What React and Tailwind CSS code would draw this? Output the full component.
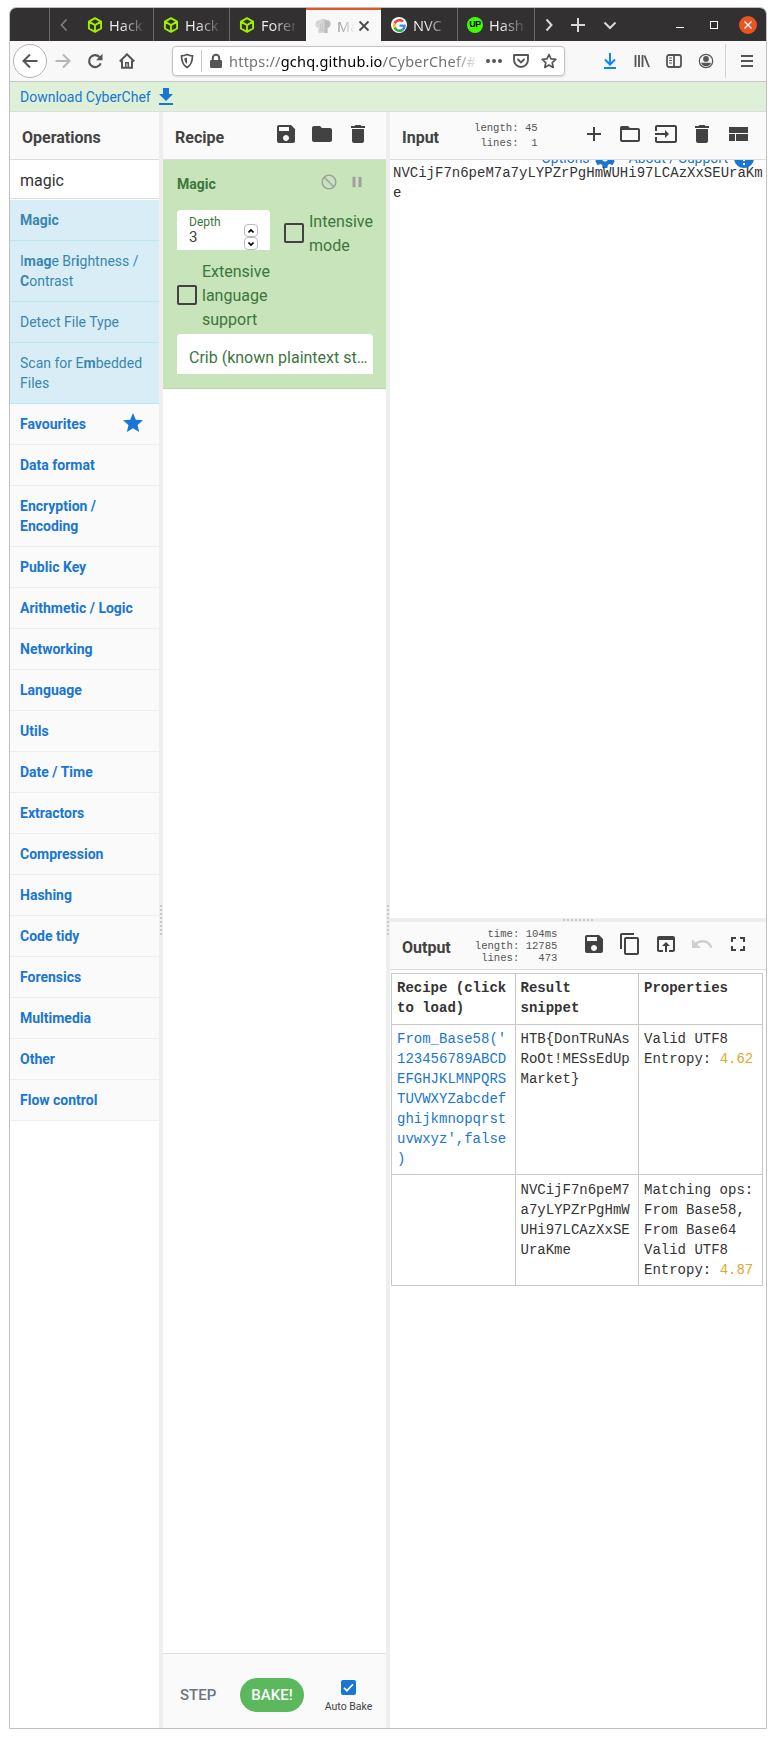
import React from "react";

const P = {
  save: "M17 3H5c-1.11 0-2 .9-2 2v14c0 1.1.89 2 2 2h14c1.1 0 2-.9 2-2V7l-4-4zm-5 16c-1.66 0-3-1.34-3-3s1.34-3 3-3 3 1.34 3 3-1.34 3-3 3zm3-10H5V5h10v4z",
  folder: "M10 4H4c-1.1 0-1.99.9-1.99 2L2 18c0 1.1.9 2 2 2h16c1.1 0 2-.9 2-2V8c0-1.1-.9-2-2-2h-8l-2-2z",
  trash: "M6 19c0 1.1.9 2 2 2h8c1.1 0 2-.9 2-2V7H6v12zM19 4h-3.5l-1-1h-5l-1 1H5v2h14V4z",
  add: "M19 13h-6v6h-2v-6H5v-2h6V5h2v6h6v2z",
  folderOpen: "M20 6h-8l-2-2H4c-1.1 0-1.99.9-1.99 2L2 18c0 1.1.9 2 2 2h16c1.1 0 2-.9 2-2V8c0-1.1-.9-2-2-2zm0 12H4V8h16v10z",
  input: "M21 3.01H3c-1.1 0-2 .9-2 2V9h2V4.99h18v14.03H3V15H1v4.01c0 1.1.9 1.98 2 1.98h18c1.1 0 2-.88 2-1.98v-14c0-1.11-.9-2-2-2zM11 16l4-4-4-4v3H1v2h10v3z",
  view: "M3 19h6v-7H3v7zm7 0h12v-7H10v7zM3 5v6h19V5H3z",
  copy: "M16 1H4c-1.1 0-2 .9-2 2v14h2V3h12V1zm3 4H8c-1.1 0-2 .9-2 2v14c0 1.1.9 2 2 2h11c1.1 0 2-.9 2-2V7c0-1.1-.9-2-2-2zm0 16H8V7h11v14z",
  open: "M19 4H5c-1.11 0-2 .9-2 2v12c0 1.1.89 2 2 2h4v-2H5V8h14v10h-4v2h4c1.1 0 2-.9 2-2V6c0-1.1-.89-2-2-2zm-7 6l-4 4h3v6h2v-6h3l-4-4z",
  undo: "M12.5 8c-2.65 0-5.05.99-6.9 2.6L2 7v9h9l-3.62-3.62c1.39-1.16 3.16-1.88 5.12-1.88 3.54 0 6.55 2.31 7.6 5.5l2.37-.78C21.08 11.03 17.15 8 12.5 8z",
  full: "M7 14H5v5h5v-2H7v-3zm-2-4h2V7h3V5H5v5zm12 7h-3v2h5v-5h-2v3zM14 5v2h3v3h2V5h-5z",
  star: "M12 17.27L18.18 21l-1.64-7.03L22 9.24l-7.19-.61L12 2 9.19 8.63 2 9.24l5.46 4.73L5.82 21z",
  block: "M12 2C6.48 2 2 6.48 2 12s4.48 10 10 10 10-4.48 10-10S17.52 2 12 2zm0 18c-4.42 0-8-3.58-8-8 0-1.85.63-3.55 1.69-4.9L16.9 18.31C15.55 19.37 13.85 20 12 20zm6.31-3.1L7.1 5.69C8.45 4.63 10.15 4 12 4c4.42 0 8 3.58 8 8 0 1.85-.63 3.55-1.69 4.9z",
  pause: "M6 19h4V5H6v14zm8-14v14h4V5h-4z",
  download: "M19 9h-4V3H9v6H5l7 7 7-7zM5 18v2h14v-2H5z",
  gear: "M19.43 12.98c.04-.32.07-.64.07-.98s-.03-.66-.07-.98l2.11-1.65c.19-.15.24-.42.12-.64l-2-3.46c-.12-.22-.39-.3-.61-.22l-2.49 1c-.52-.4-1.08-.73-1.69-.98l-.38-2.65C14.46 2.18 14.25 2 14 2h-4c-.25 0-.46.18-.49.42l-.38 2.65c-.61.25-1.17.59-1.69.98l-2.49-1c-.23-.09-.49 0-.61.22l-2 3.46c-.13.22-.07.49.12.64l2.11 1.65c-.04.32-.07.65-.07.98s.03.66.07.98l-2.11 1.65c-.19.15-.24.42-.12.64l2 3.46c.12.22.39.3.61.22l2.49-1c.52.4 1.08.73 1.69.98l.38 2.65c.03.24.24.42.49.42h4c.25 0 .46-.18.49-.42l.38-2.65c.61-.25 1.17-.59 1.69-.98l2.49 1c.23.09.49 0 .61-.22l2-3.46c.12-.22.07-.49-.12-.64l-2.11-1.65zM12 15.5c-1.93 0-3.5-1.57-3.5-3.5s1.57-3.5 3.5-3.5 3.5 1.57 3.5 3.5-1.57 3.5-3.5 3.5z",
  help: "M12 2C6.48 2 2 6.48 2 12s4.48 10 10 10 10-4.48 10-10S17.52 2 12 2zm1 17h-2v-2h2v2zm2.07-7.75l-.9.92C13.45 12.9 13 13.5 13 15h-2v-.5c0-1.1.45-2.1 1.17-2.83l1.24-1.26c.37-.36.59-.86.59-1.41 0-1.1-.9-2-2-2s-2 .9-2 2H8c0-2.21 1.79-4 4-4s4 1.79 4 4c0 .88-.36 1.68-.93 2.25z",
};

const Icon = ({ d, className = "size-6" }) => (
  <svg viewBox="0 0 24 24" fill="currentColor" className={`shrink-0 ${className}`}>
    <path d={d} />
  </svg>
);

const Line = ({ className = "size-4", sw = 2, box = 16, children }) => (
  <svg viewBox={`0 0 ${box} ${box}`} fill="none" stroke="currentColor" strokeWidth={sw} className={`shrink-0 ${className}`}>
    {children}
  </svg>
);

const Cube = () => (
  <Line className="size-4 text-[#9fef00]" sw={1.9}>
    <path d="M8 1.200l6.100 3.400v6.900L8 14.900l-6.100-3.400V4.600zM2 4.700L8 8.100l6-3.400M8 8v6.900" strokeLinejoin="round" />
  </Line>
);

const Hat = () => (
  <svg viewBox="0 0 16 16" className="size-4 shrink-0">
    <path d="M3.500 10C1 9.500.2 7.500.5 5.200.8 3 3 1.800 4.800 2.300 6 .6 10 .4 11.200 2.300c2.200-.5 4.100.9 4.300 2.900.2 2.300-.8 4.200-3 4.800V15h-9z" fill="#d6d6d6" />
    <path d="M9.500 1.200c.8.2 1.300.5 1.700 1.100 2.200-.5 4.100.9 4.300 2.900.2 2.300-.8 4.200-3 4.800V15h-3z" fill="#bcbcbc" />
    <path d="M3.500 12.800h9M5.500 6v6M7.500 5v7" stroke="#bdbdbd" strokeWidth=".7" />
  </svg>
);

const Google = () => (
  <span className="flex size-4 shrink-0 items-center justify-center rounded-full bg-white">
    <svg viewBox="0 0 48 48" className="size-[13px]">
      <path fill="#EA4335" d="M24 9.5c3.540 0 6.710 1.220 9.210 3.600l6.850-6.850C35.900 2.380 30.470 0 24 0 14.620 0 6.510 5.380 2.560 13.220l7.980 6.190C12.430 13.720 17.740 9.500 24 9.500z" />
      <path fill="#4285F4" d="M46.980 24.550c0-1.570-.15-3.090-.38-4.550H24v9.020h12.940c-.58 2.960-2.260 5.480-4.780 7.180l7.730 6c4.510-4.180 7.090-10.360 7.090-17.650z" />
      <path fill="#FBBC05" d="M10.530 28.590c-.48-1.450-.76-2.990-.76-4.590s.27-3.140.76-4.590l-7.980-6.190C.92 16.460 0 20.120 0 24c0 3.880.92 7.540 2.560 10.780l7.970-6.190z" />
      <path fill="#34A853" d="M24 48c6.480 0 11.930-2.130 15.890-5.810l-7.730-6c-2.150 1.450-4.920 2.300-8.160 2.300-6.260 0-11.570-4.220-13.470-9.910l-7.980 6.190C6.510 42.620 14.620 48 24 48z" />
    </svg>
  </span>
);

const Tab = ({ icon, label, first }) => (
  <div className={`flex w-[76px] shrink-0 items-center pt-px ${first ? "pl-[10px]" : "border-l border-[#6a6868] pl-[9px]"}`}>
    {icon}
    <span className="ml-[6px] w-[34px] overflow-hidden bg-linear-to-r from-[#f2f2f2] from-35% to-[#f2f2f2]/15 bg-clip-text font-['Noto_Sans',sans-serif] text-[14.5px] leading-5 whitespace-nowrap text-transparent">
      {label}
    </span>
  </div>
);

function TabBar() {
  return (
    <div className="flex h-[33px] bg-[#333031] text-[#d8d8d8]">
      <div className="w-[39px]" />
      <div className="flex w-7 items-center justify-center border-l border-[#6a6868] text-[#7c7a7a]">
        <Line sw={1.8}><path d="M10.500 2.500L5.500 8l5 5.500" /></Line>
      </div>
      <Tab first icon={<Cube />} label="Hack" />
      <Tab icon={<Cube />} label="Hack" />
      <Tab icon={<Cube />} label="Foren" />
      <div className="ml-px flex w-[75px] items-center border-t-2 border-[#e95420] bg-[#f8f8f8] pl-[9px]">
        <Hat />
        <span className="ml-[6px] w-[17px] overflow-hidden bg-linear-to-r from-[#888] to-[#888]/10 bg-clip-text font-['Noto_Sans',sans-serif] text-[14.5px] leading-5 whitespace-nowrap text-transparent">Ma</span>
        <span className="ml-[2px] text-[#4a4a4a]"><Line sw={1.8}><path d="M3.500 3.500l9 9M12.500 3.500l-9 9" /></Line></span>
      </div>
      <Tab first icon={<Google />} label="NVC" />
      <Tab
        icon={<span className="flex size-4 shrink-0 items-center justify-center rounded-full bg-[#3cff00] font-['Liberation_Sans',sans-serif] text-[9px] font-bold tracking-tighter text-black">UP</span>}
        label="Hash"
      />
      <div className="ml-px flex flex-1 items-center border-l border-[#6a6868] pl-[6px]">
        <Line sw={2}><path d="M5.500 2.500l5 5.500-5 5.500" /></Line>
        <span className="ml-[13px]"><Line sw={2}><path d="M8 1v14M1 8h14" /></Line></span>
        <span className="ml-4"><Line sw={2}><path d="M2.500 5.500L8 11l5.500-5.500" /></Line></span>
        <span className="mt-[5px] ml-[58px] h-px w-2 bg-white" />
        <span className="ml-[26px] size-2 border border-white" />
        <span className="ml-[21px] flex size-[18px] items-center justify-center rounded-full bg-[#e95420] text-white">
          <Line className="size-3" box={12} sw={1.4}><path d="M2.500 2.500l7 7M9.500 2.500l-7 7" /></Line>
        </span>
      </div>
    </div>
  );
}

function Toolbar() {
  return (
    <div className="flex h-[41px] items-center border-b border-[#c6c6c6] bg-[#f8f8f8] pl-[3px] text-[#555]">
      <span className="flex size-[34px] items-center justify-center rounded-full border border-[#b4b4b4] bg-white">
        <Line sw={2}><path d="M15.500 8H1.500M8 1.500L1.500 8 8 14.500" /></Line>
      </span>
      <span className="ml-2 text-[#b5b5b5]"><Line><path d="M.5 8h14M8 1.500L14.500 8 8 14.500" /></Line></span>
      <span className="ml-4">
        <Line sw={2.2}><path d="M13.700 10.300A6 6 0 1 1 12.500 4" /><path d="M15.500 .8v6.400H9z" fill="currentColor" stroke="none" /></Line>
      </span>
      <span className="ml-4">
        <Line sw={2}><path d="M.8 8.500L8 1.300l7.200 7.200M3 7.500v7.300h10V7.500" /><path d="M6.800 15V9.800h2.500V15" strokeWidth="1.500" /></Line>
      </span>
      <div className="ml-[37px] flex h-[30px] w-[393px] items-center rounded-[4px] border border-[#c4c4c4] bg-white shadow-sm">
        <span className="ml-[6px]">
          <Line sw={1.700}><path d="M8 1.500c2 1 3.500 1.300 5.500 1.300 0 5-.8 9-5.500 11.700C3.300 11.800 2.500 7.800 2.500 2.800 4.500 2.800 6 2.500 8 1.500z" /><path d="M8 4.500v6.500c-2-1.500-2.500-3.500-2.700-5.800C6.300 5.100 7.200 4.900 8 4.500z" fill="currentColor" stroke="none" /></Line>
        </span>
        <span className="ml-[6px] h-[22px] w-px bg-[#c8c8c8]" />
        <svg viewBox="0 0 16 16" className="ml-[6px] size-4 shrink-0"><rect x="2" y="7" width="12" height="8" rx="1.200" fill="#555" /><path d="M4.800 7.500V5a3.200 3.200 0 0 1 6.400 0v2.500" fill="none" stroke="#555" strokeWidth="2" /></svg>
        <span className="ml-[5px] w-[250px] overflow-hidden font-['Noto_Sans',sans-serif] text-[14.500px] leading-6 tracking-[0.22px] whitespace-nowrap text-[#737373] mask-r-from-90%">
          https://<span className="text-black">gchq.github.io</span>/CyberChef/#
        </span>
        <svg viewBox="0 0 18 6" className="ml-[6px] h-[6px] w-[18px] shrink-0 fill-[#555]"><circle cx="3" cy="3" r="2" /><circle cx="9" cy="3" r="2" /><circle cx="15" cy="3" r="2" /></svg>
        <span className="ml-[10px]"><Line sw={1.900}><path d="M1 2h14v4.800a7 7.200 0 0 1-14 0z" strokeLinejoin="round" /><path d="M4.500 6L8 9.400 11.500 6" /></Line></span>
        <span className="ml-3"><Line sw={1.700}><path d="M8 1.500l2 4.400 4.800.5-3.600 3.200 1 4.800L8 12l-4.200 2.400 1-4.800L1.200 6.400l4.800-.5z" strokeLinejoin="round" /></Line></span>
      </div>
      <span className="ml-[37px] text-[#0a84ff]"><Line><path d="M8 0v11M3 6.500l5 5 5-5M2 15h12" /></Line></span>
      <span className="ml-4"><Line sw={1.800}><path d="M1.500 2v12M5 2v12M8.500 2v12M10.500 2.500L15 14" /></Line></span>
      <span className="ml-4"><Line sw={1.800}><rect x="1" y="2" width="14" height="12" rx="2" /><path d="M8 2v12" /><path d="M3 5h3M3 7.500h3M3 10h3" strokeWidth="1" /></Line></span>
      <span className="ml-4"><Line sw={1.200}><circle cx="8" cy="8" r="6.700" /><circle cx="8" cy="5.900" r="2.900" fill="currentColor" stroke="none" /><path d="M3 9.800h10c-.6 2.200-2.500 3.500-5 3.500s-4.400-1.300-5-3.500z" fill="currentColor" stroke="none" /></Line></span>
      <span className="ml-[11px] h-[34px] w-px bg-[#d2d2d2]" />
      <span className="ml-[13px]"><Line><path d="M2 3h12M2 8h12M2 13h12" /></Line></span>
    </div>
  );
}

const found = [
  <b className="font-bold">Magic</b>,
  <>I<b className="font-bold">mag</b>e Br<b className="font-bold">i</b>ghtness / <b className="font-bold">C</b>ontrast</>,
  <>Detect File Type</>,
  <>Scan for E<b className="font-bold">m</b>bedded Files</>,
];

const categories = [
  "Favourites", "Data format", "Encryption / Encoding", "Public Key", "Arithmetic / Logic", "Networking",
  "Language", "Utils", "Date / Time", "Extractors", "Compression", "Hashing", "Code tidy", "Forensics",
  "Multimedia", "Other", "Flow control",
];

const Header = ({ title, children }) => (
  <div className="flex h-12 shrink-0 items-center border-b border-[#ddd] bg-[#fafafa] text-[#424242]">
    <span className="pt-[5px] pl-3 text-base leading-6 font-bold">{title}</span>
    {children}
  </div>
);

const Tools = ({ icons, className = "" }) => (
  <div className={`ml-auto flex items-center gap-3 pb-[3px] ${className}`}>
    {icons.map((d, i) => (
      <Icon key={i} d={d} className={d === P.undo ? "size-6 text-[#cfcfcf]" : "size-6"} />
    ))}
  </div>
);

const VGutter = () => (
  <div className="flex w-1 shrink-0 justify-center bg-[#eee] pt-[793px]">
    <div className="flex flex-col gap-[2px]">
      {[...Array(8)].map((_, i) => <span key={i} className="size-[2px] bg-[#c9c9c9]" />)}
    </div>
  </div>
);

function Operations() {
  return (
    <section className="flex w-[149px] shrink-0 flex-col">
      <Header title="Operations" />
      <div className="mb-px h-[39px] border-b border-[#ddd] pt-[9px] pl-[10px] text-base leading-6 text-[#333]">magic</div>
      {found.map((f, i) => (
        <div key={i} className="border-b border-[#bce8f1] bg-[#d9edf7] px-[10px] py-[10px] text-sm leading-5 text-[#3a87ad]">{f}</div>
      ))}
      {categories.map((c) => (
        <div key={c} className="flex justify-between border-b border-[#eee] bg-[#fafafa] px-[10px] py-[10px] text-sm leading-5 font-bold text-[#1976d2]">
          <span>{c}</span>
          {c === "Favourites" && <Icon d={P.star} className="-my-[3px] mr-1 size-6" />}
        </div>
      ))}
    </section>
  );
}

const Box = () => <span className="size-5 shrink-0 rounded-[2px] border-2 border-[#424242]" />;

const Spin = ({ d }) => (
  <span className="flex h-[13px] w-[14px] items-center justify-center rounded-[4px] border border-[#bbb] text-black">
    <Line className="h-[6px] w-[6px]" box={6} sw={1.600}><path d={d} /></Line>
  </span>
);

function Recipe() {
  return (
    <section className="flex w-[223px] shrink-0 flex-col">
      <Header title="Recipe"><Tools icons={[P.save, P.folder, P.trash]} className="mr-4" /></Header>
      <div className="h-[229px] border-b border-[#b3dba1] bg-[#c8e4ba] pr-[13px] pl-[14px] text-base leading-6 text-[#3c763d]">
        <div className="flex h-[50px] items-center">
          <span className="-mt-[2px] text-sm font-bold">Magic</span>
          <Icon d={P.block} className="-mt-[6px] ml-auto size-[18px] text-[#a0a0a0]" />
          <Icon d={P.pause} className="-mt-[6px] mr-[7px] ml-[10px] size-[18px] text-[#a0a0a0]" />
        </div>
        <div className="flex h-12">
          <div className="flex h-10 w-[93px] justify-between rounded-t-[4px] bg-white pr-3 pl-3">
            <div className="flex flex-col pt-[5px]">
              <span className="text-xs leading-[14px]">Depth</span>
              <span className="text-[15px] leading-4 text-[#424242]">3</span>
            </div>
            <div className="flex flex-col pt-[14px]"><Spin d="M.5 4.500L3 2l2.500 2.500" /><Spin d="M.5 1.500L3 4l2.500-2.500" /></div>
          </div>
          <div className="ml-[14px] flex items-start gap-[5px]">
            <span className="flex pt-[13px]"><Box /></span>
            <span>Intensive<br />mode</span>
          </div>
        </div>
        <div className="mt-[2px] flex h-[74px] items-start gap-[5px]">
          <span className="flex pt-[25px]"><Box /></span>
          <span>Extensive<br />language<br />support</span>
        </div>
        <div className="h-10 truncate rounded-t-[4px] bg-white pt-[12px] pr-[5px] pl-3">Crib (known plaintext string or regex)</div>
      </div>
      <div className="flex-1" />
      <div className="flex h-[75px] border-t border-[#ddd] bg-[#fafafa] pt-6">
        <span className="ml-[17px] w-[38px] text-[15px] leading-[34px] font-medium text-[#6c757d]">STEP</span>
        <span className="ml-[22px] h-[34px] w-16 rounded-full bg-[#5cb85c] text-center text-[15px] leading-[34px] font-medium text-white">BAKE!</span>
        <div className="ml-[14px] flex w-[61px] flex-col items-center pt-[2px]">
          <span className="flex size-[15px] items-center justify-center rounded-[2px] bg-[#1976d2] text-white">
            <Line className="size-[13px]" sw={2.200}><path d="M2.500 8.500l3.500 3.500L13.500 4" /></Line>
          </span>
          <span className="mt-[4px] text-[10.5px] leading-4 whitespace-nowrap text-[#424242]">Auto Bake</span>
        </div>
      </div>
    </section>
  );
}

const Stats = ({ lines, className }) => (
  <pre className={`font-['Liberation_Mono',monospace] text-[10.600px] text-[#555] ${className}`}>{lines.join("\n")}</pre>
);

const Amber = ({ children }) => <span className="text-[#dfa82f]">{children}</span>;

function IO() {
  const row = "grid grid-cols-[124px_123px_125px] border-x border-b border-[#c8c8c8]";
  const cell = "border-r border-[#c8c8c8] pt-1 pl-[5px] last:border-r-0";
  const middle = "border-r border-[#c8c8c8] pt-1 pl-[4.500px]";
  return (
    <section className="flex w-[376px] shrink-0 flex-col">
      <Header title="Input">
        <Stats className="ml-[35px] leading-[15px]" lines={["length: 45", " lines:  1"]} />
        <Tools icons={[P.add, P.folderOpen, P.input, P.trash, P.view]} className="mr-4" />
      </Header>
      <div className="relative h-[758px] overflow-hidden pt-[3px] pl-[3px] font-['Liberation_Mono',monospace] text-sm leading-5 text-[#333]">
        <div className="absolute -top-[14px] right-[10px] flex h-6 items-center font-['Roboto',sans-serif] text-sm text-[#1976d2]">
          <span>Options</span>
          <Icon d={P.gear} className="ml-[3px] size-6" />
          <span className="ml-3">About / Support</span>
          <Icon d={P.help} className="ml-1 size-6" />
        </div>
        <div className="relative w-[371px] break-all">NVCijF7n6peM7a7yLYPZrPgHmWUHi97LCAzXxSEUraKme</div>
      </div>
      <div className="flex h-1 items-center justify-center gap-[2px] bg-[#eee]">
        {[...Array(8)].map((_, i) => <span key={i} className="size-[2px] bg-[#c9c9c9]" />)}
      </div>
      <Header title="Output">
        <Stats className="ml-6 leading-3" lines={["  time: 104ms", "length: 12785", " lines:   473"]} />
        <Tools icons={[P.save, P.copy, P.open, P.undo, P.full]} className="mr-4" />
      </Header>
      <div className="pt-[3px] pl-px font-['Liberation_Mono',monospace] text-sm leading-5 text-[#333]">
        <div className={`${row} h-[52px] w-[372px] border-t font-bold`}>
          <div className={cell}>Recipe (click<br />to load)</div>
          <div className={middle}>Result<br />snippet</div>
          <div className={cell}>Properties</div>
        </div>
        <div className={`${row} h-[150px] w-[372px]`}>
          <div className={`${cell} text-[#1976d2]`}>From_Base58('<br />123456789ABCD<br />EFGHJKLMNPQRS<br />TUVWXYZabcdef<br />ghijkmnopqrst<br />uvwxyz',false<br />)</div>
          <div className={middle}>{"HTB{DonTRuNAs"}<br />RoOt!MESsEdUp<br />{"Market}"}</div>
          <div className={cell}>Valid UTF8<br />Entropy: <Amber>4.62</Amber></div>
        </div>
        <div className={`${row} h-[111px] w-[372px]`}>
          <div className={cell} />
          <div className={middle}><div className="pt-px">NVCijF7n6peM7<br />a7yLYPZrPgHmW<br />UHi97LCAzXxSE<br />UraKme</div></div>
          <div className={cell}><div className="pt-px">Matching ops:<br />From Base58,<br />From Base64<br />Valid UTF8<br />Entropy: <Amber>4.87</Amber></div></div>
        </div>
      </div>
    </section>
  );
}

export default function App() {
  return (
    <div className="h-[1738px] w-[776px] bg-white pt-[7px] pl-[9px] font-['Roboto',sans-serif]">
      <div className="flex h-[1722px] w-[758px] flex-col overflow-hidden rounded-t-[7px] border border-[#c0c0c0] bg-white">
        <TabBar />
        <Toolbar />
        <div className="flex h-[30px] items-center border-b border-[#ddd] bg-[#dff0d8] pl-[10px] text-[#1976d2]">
          <span className="text-[14px] leading-5">Download CyberChef</span>
          <Icon d={P.download} className="ml-[3px] size-6" />
        </div>
        <div className="flex flex-1">
          <Operations />
          <VGutter />
          <Recipe />
          <VGutter />
          <IO />
        </div>
      </div>
    </div>
  );
}
